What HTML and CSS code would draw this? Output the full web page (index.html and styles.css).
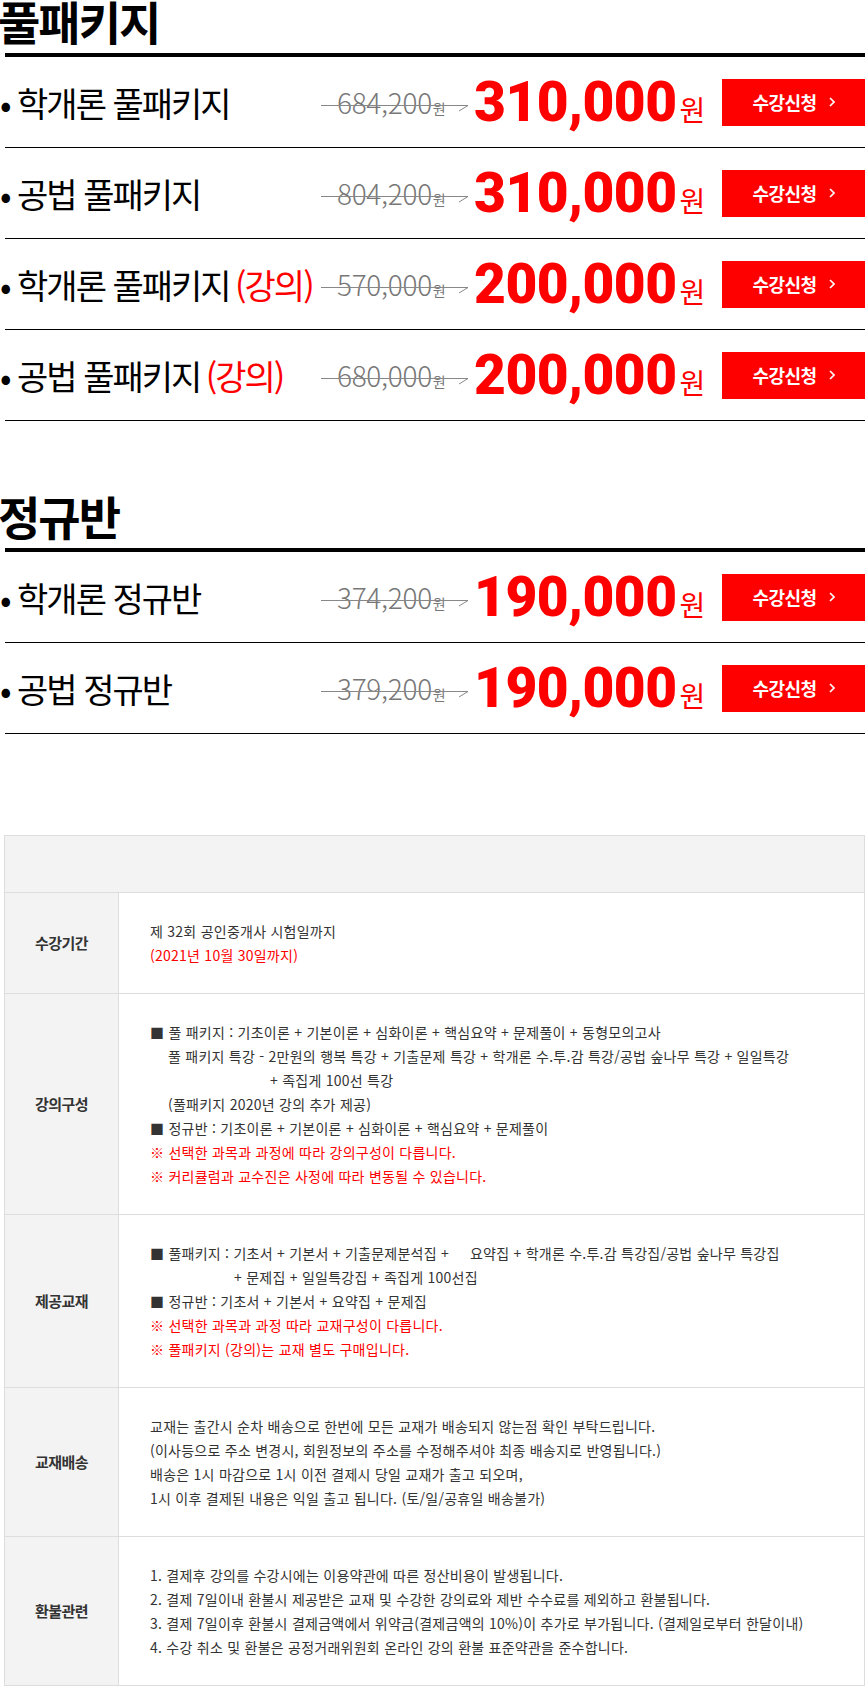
FILE: index.html
```html
<!DOCTYPE html>
<html lang="ko">
<head>
<meta charset="utf-8">
<title>풀패키지</title>
<link rel="stylesheet" href="styles.css">
</head>
<body>
<div class="page">
  <section class="pkg">
    <h2 class="pkg-title">풀패키지</h2>
    <ul class="pkg-list">
      <li class="pkg-row">
        <span class="name">• 학개론 풀패키지</span>
        <span class="old"><span class="old-num">684,200</span><span class="old-won">원</span><svg class="strike" viewBox="0 0 147 30" preserveAspectRatio="none"><path d="M0 18.5H147L138 24"/></svg></span>
        <span class="price"><span class="num">310,000</span><span class="won">원</span></span>
        <a class="btn" href="#">수강신청<svg class="chev" viewBox="0 0 6 10"><path d="M1 1L5 5L1 9"/></svg></a>
      </li>
      <li class="pkg-row">
        <span class="name">• 공법 풀패키지</span>
        <span class="old"><span class="old-num">804,200</span><span class="old-won">원</span><svg class="strike" viewBox="0 0 147 30" preserveAspectRatio="none"><path d="M0 18.5H147L138 24"/></svg></span>
        <span class="price"><span class="num">310,000</span><span class="won">원</span></span>
        <a class="btn" href="#">수강신청<svg class="chev" viewBox="0 0 6 10"><path d="M1 1L5 5L1 9"/></svg></a>
      </li>
      <li class="pkg-row">
        <span class="name">• 학개론 풀패키지 <em class="lec">(강의)</em></span>
        <span class="old"><span class="old-num">570,000</span><span class="old-won">원</span><svg class="strike" viewBox="0 0 147 30" preserveAspectRatio="none"><path d="M0 18.5H147L138 24"/></svg></span>
        <span class="price"><span class="num">200,000</span><span class="won">원</span></span>
        <a class="btn" href="#">수강신청<svg class="chev" viewBox="0 0 6 10"><path d="M1 1L5 5L1 9"/></svg></a>
      </li>
      <li class="pkg-row">
        <span class="name">• 공법 풀패키지 <em class="lec">(강의)</em></span>
        <span class="old"><span class="old-num">680,000</span><span class="old-won">원</span><svg class="strike" viewBox="0 0 147 30" preserveAspectRatio="none"><path d="M0 18.5H147L138 24"/></svg></span>
        <span class="price"><span class="num">200,000</span><span class="won">원</span></span>
        <a class="btn" href="#">수강신청<svg class="chev" viewBox="0 0 6 10"><path d="M1 1L5 5L1 9"/></svg></a>
      </li>
    </ul>
  </section>

  <section class="pkg pkg-second">
    <h2 class="pkg-title">정규반</h2>
    <ul class="pkg-list">
      <li class="pkg-row">
        <span class="name">• 학개론 정규반</span>
        <span class="old"><span class="old-num">374,200</span><span class="old-won">원</span><svg class="strike" viewBox="0 0 147 30" preserveAspectRatio="none"><path d="M0 18.5H147L138 24"/></svg></span>
        <span class="price"><span class="num">190,000</span><span class="won">원</span></span>
        <a class="btn" href="#">수강신청<svg class="chev" viewBox="0 0 6 10"><path d="M1 1L5 5L1 9"/></svg></a>
      </li>
      <li class="pkg-row">
        <span class="name">• 공법 정규반</span>
        <span class="old"><span class="old-num">379,200</span><span class="old-won">원</span><svg class="strike" viewBox="0 0 147 30" preserveAspectRatio="none"><path d="M0 18.5H147L138 24"/></svg></span>
        <span class="price"><span class="num">190,000</span><span class="won">원</span></span>
        <a class="btn" href="#">수강신청<svg class="chev" viewBox="0 0 6 10"><path d="M1 1L5 5L1 9"/></svg></a>
      </li>
    </ul>
  </section>
</div>

<table class="info">
  <tr class="info-head"><td colspan="2"></td></tr>
  <tr>
    <th>수강기간</th>
    <td>
      <div>제 32회 공인중개사 시험일까지</div>
      <div class="red">(2021년 10월 30일까지)</div>
    </td>
  </tr>
  <tr>
    <th>강의구성</th>
    <td>
      <div>■ 풀 패키지 : 기초이론 + 기본이론 + 심화이론 + 핵심요약 + 문제풀이 + 동형모의고사</div>
      <div class="ind1">풀 패키지 특강 - 2만원의 행복 특강 + 기출문제 특강 + 학개론 수.투.감 특강/공법 숲나무 특강 + 일일특강</div>
      <div class="ind3">+ 족집게 100선 특강</div>
      <div class="ind1">(풀패키지 2020년 강의 추가 제공)</div>
      <div>■ 정규반 : 기초이론 + 기본이론 + 심화이론 + 핵심요약 + 문제풀이</div>
      <div class="red">※ 선택한 과목과 과정에 따라 강의구성이 다릅니다.</div>
      <div class="red">※ 커리큘럼과 교수진은 사정에 따라 변동될 수 있습니다.</div>
    </td>
  </tr>
  <tr>
    <th>제공교재</th>
    <td>
      <div>■ 풀패키지 : 기초서 + 기본서 + 기출문제분석집 +&nbsp;&nbsp;&nbsp;&nbsp;&nbsp;요약집 + 학개론 수.투.감 특강집/공법 숲나무 특강집</div>
      <div class="ind2">+ 문제집 + 일일특강집 + 족집게 100선집</div>
      <div>■ 정규반 : 기초서 + 기본서 + 요약집 + 문제집</div>
      <div class="red">※ 선택한 과목과 과정 따라 교재구성이 다릅니다.</div>
      <div class="red">※ 풀패키지 (강의)는 교재 별도 구매입니다.</div>
    </td>
  </tr>
  <tr>
    <th>교재배송</th>
    <td>
      <div>교재는 출간시 순차 배송으로 한번에 모든 교재가 배송되지 않는점 확인 부탁드립니다.</div>
      <div>(이사등으로 주소 변경시, 회원정보의 주소를 수정해주셔야 최종 배송지로 반영됩니다.)</div>
      <div>배송은 1시 마감으로 1시 이전 결제시 당일 교재가 출고 되오며,</div>
      <div>1시 이후 결제된 내용은 익일 출고 됩니다. (토/일/공휴일 배송불가)</div>
    </td>
  </tr>
  <tr>
    <th>환불관련</th>
    <td>
      <div>1. 결제후 강의를 수강시에는 이용약관에 따른 정산비용이 발생됩니다.</div>
      <div>2. 결제 7일이내 환불시 제공받은 교재 및 수강한 강의료와 제반 수수료를 제외하고 환불됩니다.</div>
      <div>3. 결제 7일이후 환불시 결제금액에서 위약금(결제금액의 10%)이 추가로 부가됩니다. (결제일로부터 한달이내)</div>
      <div>4. 수강 취소 및 환불은 공정거래위원회 온라인 강의 환불 표준약관을 준수합니다.</div>
    </td>
  </tr>
</table>
</body>
</html>
```

FILE: styles.css
```css
* { box-sizing: border-box; margin: 0; padding: 0; }

body {
  width: 865px;
  background: #fff;
  color: #000;
  font-family: "Noto Sans CJK KR", "Noto Sans", sans-serif;
}

.page { padding-left: 5px; }

.pkg-title {
  height: 53px;
  margin-left: -7px;
  font-size: 46px;
  font-weight: 700;
  line-height: 40px;
  letter-spacing: -2px;
}

.pkg-second { margin-top: 74px; }

.pkg-list {
  list-style: none;
  border-top: 4px solid #000;
}

.pkg-row {
  display: grid;
  grid-template-columns: 316px 153px 248px 143px;
  align-items: center;
  height: 91px;
  border-bottom: 1px solid #000;
}

.name {
  margin-left: -5px;
  font-size: 34px;
  font-weight: 400;
  letter-spacing: -2px;
  white-space: nowrap;
}

.lec {
  margin-left: -2px;
  font-style: normal;
  color: #ff0000;
}

.old {
  position: relative;
  display: flex;
  align-items: baseline;
  width: 147px;
  height: 30px;
  padding-left: 16px;
  color: #777;
}

.old-num {
  font-size: 28px;
  font-weight: 300;
  line-height: 30px;
  letter-spacing: -0.3px;
}

.old-won {
  margin-left: 1px;
  font-size: 14px;
  line-height: 30px;
}

.strike {
  position: absolute;
  left: 0;
  top: 0;
  width: 100%;
  height: 100%;
  fill: none;
  stroke: #888;
  stroke-width: 1;
}

.price {
  display: flex;
  align-items: baseline;
  color: #ff0000;
}

.num {
  font-family: Roboto, "Liberation Sans", sans-serif;
  font-size: 55px;
  font-weight: 900;
  line-height: 1;
  letter-spacing: -0.5px;
}

.won {
  margin-left: 3px;
  font-size: 28px;
  font-weight: 400;
  line-height: 1;
}

.btn {
  display: flex;
  align-items: center;
  justify-content: center;
  gap: 12px;
  height: 47px;
  background: #ff0000;
  color: #fff;
  font-size: 18px;
  font-weight: 700;
  letter-spacing: -0.5px;
  text-decoration: none;
}

.chev {
  width: 6px;
  height: 10px;
  fill: none;
  stroke: #fff;
  stroke-width: 1.6;
}

.info {
  width: 861px;
  margin: 101px 0 0 4px;
  border-collapse: collapse;
  font-size: 14px;
  line-height: 24px;
  letter-spacing: 0.25px;
  color: #333;
}

.info td, .info th { border: 1px solid #ddd; }

.info-head td {
  height: 57px;
  background: #f3f3f3;
}

.info th {
  width: 114px;
  background: #f3f3f3;
  font-size: 15px;
  font-weight: 700;
  letter-spacing: -0.5px;
  text-align: center;
  vertical-align: middle;
}

.info td {
  padding: 26px 0 26px 31px;
  text-align: left;
  vertical-align: middle;
}

.red { color: #ff0000; }
.ind1 { padding-left: 18px; }
.ind2 { padding-left: 84px; }
.ind3 { padding-left: 120px; }
```
